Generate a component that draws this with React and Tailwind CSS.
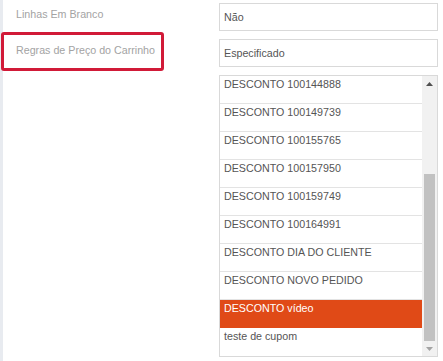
import React from "react";

const options = [
  "DESCONTO 100144888",
  "DESCONTO 100149739",
  "DESCONTO 100155765",
  "DESCONTO 100157950",
  "DESCONTO 100159749",
  "DESCONTO 100164991",
  "DESCONTO DIA DO CLIENTE",
  "DESCONTO NOVO PEDIDO",
  "DESCONTO vídeo",
  "teste de cupom",
];

const selected = "DESCONTO vídeo";

function Arrow({ up, color }) {
  return (
    <svg width="7" height="4" viewBox="0 0 7 4" className="block">
      <path d={up ? "M0 4 L3.5 0 L7 4 Z" : "M0 0 L3.5 4 L7 0 Z"} fill={color} />
    </svg>
  );
}

export default function App() {
  return (
    <div className="relative flex h-[361px] w-[443px] overflow-hidden bg-white font-['Liberation_Sans',Arial,sans-serif] text-[10.7px] leading-[13px]">
      <div className="w-[3px] shrink-0 bg-[#e8ebf0]" />

      <div className="flex-1 pt-[3px] pr-[5px]">
        {/* Linhas em branco */}
        <div className="flex">
          <div className="w-[216px] pl-[13px] pt-[5px] text-[#a3a3a3]">Linhas Em Branco</div>
          <div className="flex h-[28px] w-[219px] items-center border border-[#d9d9d9] px-[4px] text-[#555]">
            Não
          </div>
        </div>

        {/* Regras de preço */}
        <div className="mt-[8px] flex">
          <div className="w-[216px] pl-[13px] pt-[5px] text-[#a3a3a3]">Regras de Preço do Carrinho</div>
          <div className="flex h-[28px] w-[219px] items-center border border-[#d9d9d9] px-[4px] text-[#555]">
            Especificado
          </div>
        </div>

        {/* lista de regras */}
        <div className="mt-[8px] flex">
          <div className="w-[216px]" />
          <div className="flex h-[282px] w-[219px] border border-[#d9d9d9]">
            <ul className="flex-1">
              {options.map((o, i) => (
                <li
                  key={o}
                  className={
                    "h-[28px] px-[4px] pt-[2px] leading-[12px] " +
                    (o === selected
                      ? "bg-[#e04a17] text-white"
                      : "text-[#555]") +
                    (i < options.length - 1 && o !== selected ? " border-b border-[#e3e3e3]" : "")
                  }
                >
                  {o}
                </li>
              ))}
            </ul>
            <div className="flex w-[15px] flex-col bg-[#f1f1f1]">
              <div className="flex h-[15px] items-center justify-center">
                <Arrow up color="#505050" />
              </div>
              <div className="h-[83px]" />
              <div className="mx-[2px] h-[167px] bg-[#c1c1c1]" />
              <div className="flex h-[15px] items-center justify-center">
                <Arrow color="#a3a3a3" />
              </div>
            </div>
          </div>
        </div>
      </div>

      {/* destaque em vermelho */}
      <div className="absolute left-[1px] top-[32px] h-[39px] w-[163px] rounded-[3px] border-[3px] border-[#d11a38]" />
    </div>
  );
}
